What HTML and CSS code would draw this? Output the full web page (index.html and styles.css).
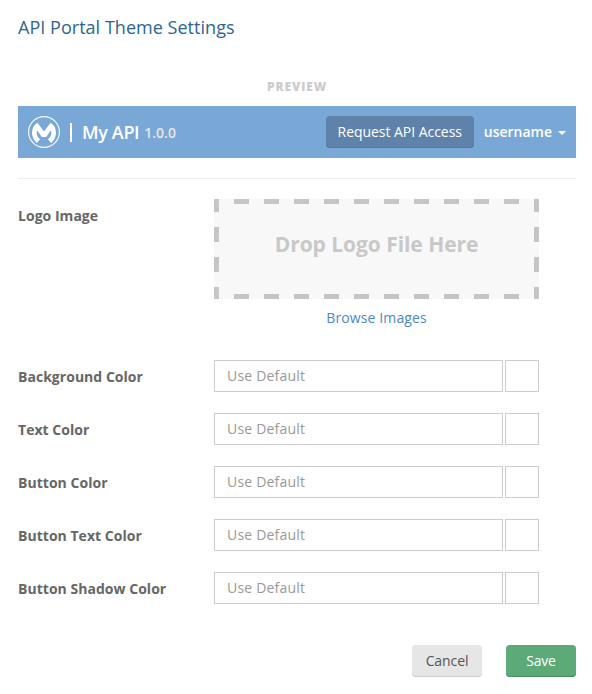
FILE: index.html
```html
<!DOCTYPE html>
<html lang="en">
<head>
<meta charset="utf-8">
<title>API Portal Theme Settings</title>
<link rel="stylesheet" href="styles.css">
</head>
<body>
<main class="dialog">
  <h1 class="title">API Portal Theme Settings</h1>
  <div class="preview-label">PREVIEW</div>
  <header class="preview">
    <svg class="logo" viewBox="0 0 32 32" width="32" height="32" aria-hidden="true">
      <circle cx="16" cy="16" r="15.4" fill="none" stroke="#fff" stroke-width="1.1"/>
      <path fill="#fff" d="M9.400 6.800L16 15.600L22.600 6.800C26 9 28 12.300 28 16.500C28 20.800 26.200 24.300 23.200 26.900L19.900 23.200C22.400 21.300 23.500 18.700 23.300 15.700L22.900 14.200L18.200 20.900H13.800L9.100 14.200L8.700 15.700C8.500 18.700 9.600 21.300 12.100 23.200L8.800 26.900C5.800 24.300 4 20.800 4 16.500C4 12.300 6 9 9.400 6.800Z"/>
    </svg>
    <span class="divider"></span>
    <span class="api-name">My API</span>
    <span class="version">1.0.0</span>
    <button class="btn btn-request" type="button">Request API Access</button>
    <span class="user">username</span>
    <span class="caret"></span>
  </header>
  <form class="form">
    <div class="row row-logo">
      <span class="label">Logo Image</span>
      <div class="upload">
        <div class="dropzone">Drop Logo File Here</div>
        <a class="browse">Browse Images</a>
      </div>
    </div>
    <div class="row">
      <label class="label" for="background">Background Color</label>
      <input class="field" id="background" placeholder="Use Default"><span class="swatch"></span>
    </div>
    <div class="row">
      <label class="label" for="text">Text Color</label>
      <input class="field" id="text" placeholder="Use Default"><span class="swatch"></span>
    </div>
    <div class="row">
      <label class="label" for="button">Button Color</label>
      <input class="field" id="button" placeholder="Use Default"><span class="swatch"></span>
    </div>
    <div class="row">
      <label class="label" for="button-text">Button Text Color</label>
      <input class="field" id="button-text" placeholder="Use Default"><span class="swatch"></span>
    </div>
    <div class="row">
      <label class="label" for="button-shadow">Button Shadow Color</label>
      <input class="field" id="button-shadow" placeholder="Use Default"><span class="swatch"></span>
    </div>
  </form>
  <footer class="actions">
    <button class="btn btn-cancel" type="button">Cancel</button>
    <button class="btn btn-save" type="button">Save</button>
  </footer>
</main>
</body>
</html>
```
FILE: styles.css
```css
* {
  box-sizing: border-box;
}

body {
  margin: 0;
  background: #fff;
  color: #666;
  font: 14px/20px "Open Sans", sans-serif;
}

.dialog {
  padding: 15px 16px 0 18px;
}

.title {
  margin: 0;
  color: #2b6690;
  font-size: 18px;
  font-weight: 400;
  line-height: 25px;
  letter-spacing: 0.03px;
}

.preview-label {
  margin-top: 37px;
  height: 29px;
  color: #ccc;
  font-size: 12px;
  font-weight: 800;
  line-height: 20px;
  letter-spacing: 0.9px;
  text-align: center;
}

.preview {
  display: flex;
  align-items: center;
  height: 52px;
  padding: 0 10px;
  background: #79a8d7;
  color: #fff;
}

.divider {
  width: 2px;
  height: 19px;
  margin: 0 10px;
  background: #fff;
}

.api-name {
  font-size: 18px;
  font-weight: 600;
  letter-spacing: -0.35px;
}

.version {
  margin: 2px auto 0 5px;
  color: #e6e6e6;
  font-weight: 600;
}

.user {
  margin: 0 6px 0 10px;
  font-weight: 600;
}

.caret {
  margin-top: 2px;
  border: 4px solid transparent;
  border-top-color: #fff;
  border-bottom: 0;
}

.btn {
  height: 32px;
  padding: 0 0 1px;
  border: 0;
  border-radius: 4px;
  font: 14px/20px "Open Sans", sans-serif;
}

.btn-request {
  width: 148px;
  background: #5f82ab;
  box-shadow: inset 0 -1px #5374a0;
  color: #fff;
  letter-spacing: -0.04px;
}

.form {
  margin-top: 20px;
  padding-top: 20px;
  border-top: 1px solid #eee;
}

.row {
  display: flex;
  height: 32px;
  margin-bottom: 21px;
}

.row-logo {
  height: 140px;
}

.row:last-child {
  margin-bottom: 0;
}

.label {
  width: 196px;
  padding-top: 7px;
  font-weight: 700;
  letter-spacing: 0.03px;
}

.upload {
  width: 325px;
  text-align: center;
}

.dropzone {
  --dash: #c5c5c5;
  height: 100px;
  margin-bottom: 9px;
  background:
    linear-gradient(90deg, var(--dash) 50%, transparent 50%) -10px 0 / 30px 5px repeat-x,
    linear-gradient(90deg, var(--dash) 50%, transparent 50%) -10px 100% / 30px 5px repeat-x,
    linear-gradient(var(--dash) 50%, transparent 50%) 0 -2px / 5px 30px repeat-y,
    linear-gradient(var(--dash) 50%, transparent 50%) 100% -2px / 5px 30px repeat-y,
    #f8f8f8;
  color: #c8c8c8;
  font-size: 21px;
  font-weight: 700;
  line-height: 90px;
  letter-spacing: -0.05px;
}

.browse {
  display: block;
  color: #4c88c6;
  letter-spacing: 0.12px;
}

.field {
  width: 289px;
  height: 32px;
  margin: 0 2px 0 0;
  padding: 0 12px 2px;
  border: 1px solid #ccc;
  border-radius: 0;
  background: #fff;
  font: 14px/20px "Open Sans", sans-serif;
  letter-spacing: 0.2px;
}

.field::placeholder {
  color: #999;
}

.swatch {
  width: 34px;
  height: 32px;
  border: 1px solid #ccc;
}

.actions {
  display: flex;
  justify-content: flex-end;
  gap: 24px;
  margin-top: 41px;
}

.btn-cancel,
.btn-save {
  width: 70px;
}

.btn-cancel {
  background: #e6e6e6;
  box-shadow: inset 0 -1px #ccc;
  color: #555;
  letter-spacing: -0.1px;
}

.btn-save {
  background: #5caa77;
  box-shadow: inset 0 -1px #468c60;
  color: #fff;
  letter-spacing: -0.2px;
}
```
